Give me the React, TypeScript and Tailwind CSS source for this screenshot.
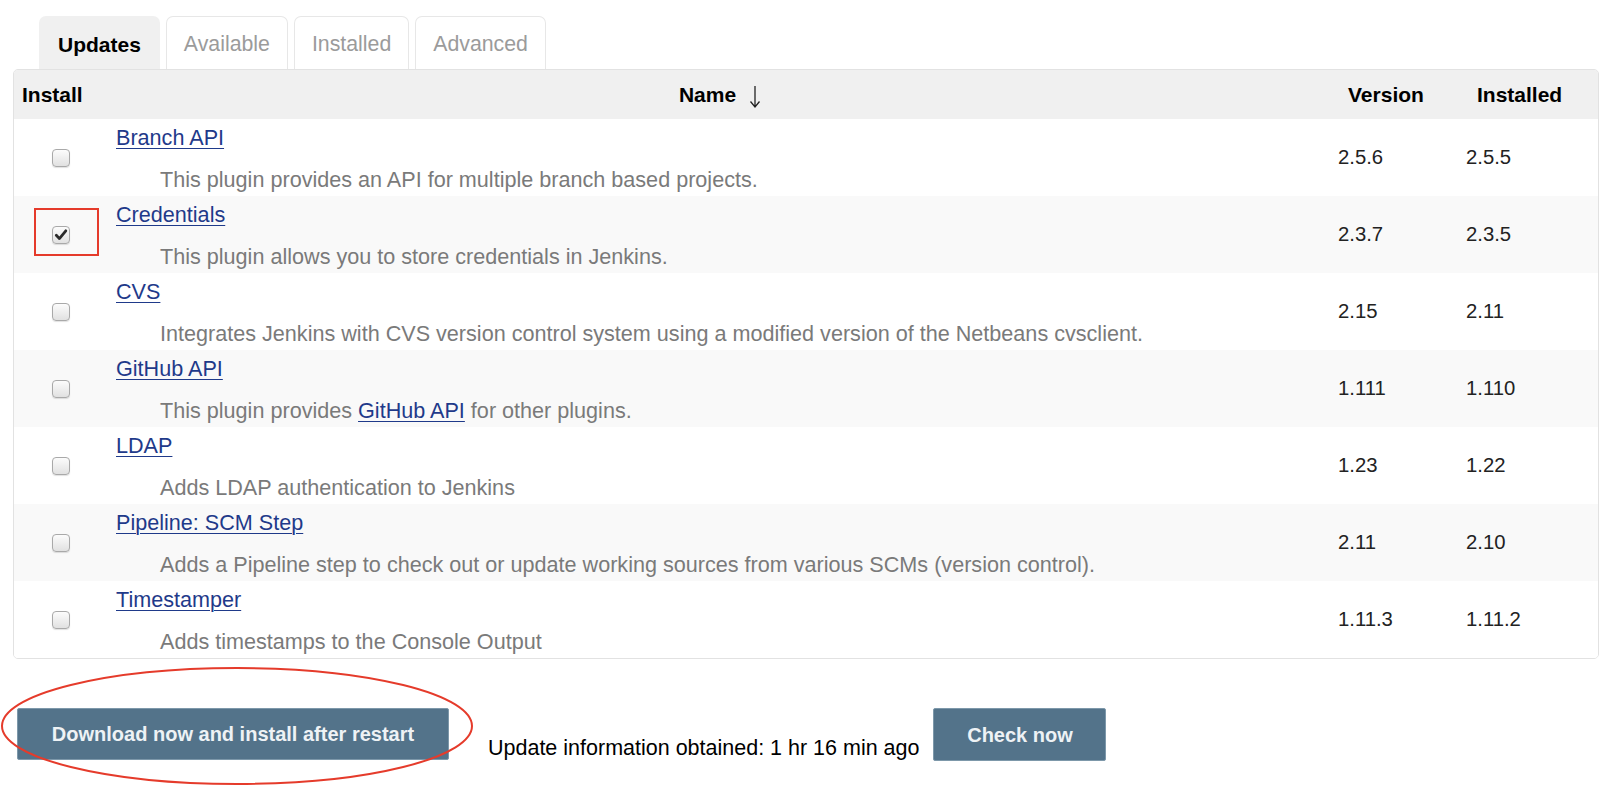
import React from "react";

type Row = {
  name: string;
  desc: React.ReactNode;
  version: string;
  installed: string;
  checked?: boolean;
};

const linkCls = "text-[#1f3a8a] underline decoration-1 underline-offset-[3px]";

const rows: Row[] = [
  { name: "Branch API", desc: "This plugin provides an API for multiple branch based projects.", version: "2.5.6", installed: "2.5.5" },
  { name: "Credentials", desc: "This plugin allows you to store credentials in Jenkins.", version: "2.3.7", installed: "2.3.5", checked: true },
  { name: "CVS", desc: "Integrates Jenkins with CVS version control system using a modified version of the Netbeans cvsclient.", version: "2.15", installed: "2.11" },
  {
    name: "GitHub API",
    desc: (
      <>
        This plugin provides <span className={linkCls}>GitHub API</span> for other plugins.
      </>
    ),
    version: "1.111",
    installed: "1.110",
  },
  { name: "LDAP", desc: "Adds LDAP authentication to Jenkins", version: "1.23", installed: "1.22" },
  { name: "Pipeline: SCM Step", desc: "Adds a Pipeline step to check out or update working sources from various SCMs (version control).", version: "2.11", installed: "2.10" },
  { name: "Timestamper", desc: "Adds timestamps to the Console Output", version: "1.11.3", installed: "1.11.2" },
];

function Checkbox({ checked }: { checked?: boolean }) {
  return (
    <div className="w-[18px] h-[18px] rounded-[4px] border border-[#a9a9a9] bg-gradient-to-b from-[#fcfcfc] to-[#e1e1e1] shadow-[0_1px_1px_rgba(0,0,0,0.12)] flex items-center justify-center">
      {checked && (
        <svg width="14" height="14" viewBox="0 0 14 14">
          <path d="M2.3 7.3 L5.4 10.6 L11.8 2.8" fill="none" stroke="#2a2a2a" strokeWidth="2.8" strokeLinecap="round" strokeLinejoin="round" />
        </svg>
      )}
    </div>
  );
}

export default function App() {
  const tabs = ["Updates", "Available", "Installed", "Advanced"];
  return (
    <div className="relative w-[1600px] h-[795px] overflow-hidden bg-white font-['Liberation_Sans',Arial,sans-serif] text-[21.6px]">
      <div className="pl-[13px] pr-[1px] pt-[16px]">
        {/* tabs */}
        <div className="flex gap-[6px] pl-[26px] h-[53px]">
          {tabs.map((t, i) =>
            i === 0 ? (
              <div key={t} className="px-[19px] pt-[4px] rounded-t-[7px] bg-[#f0f0f0] flex items-center font-bold text-[21px] text-black">
                {t}
              </div>
            ) : (
              <div key={t} className="px-[17px] pt-[4px] rounded-t-[7px] border border-b-0 border-[#e7e7e7] flex items-center text-[21.3px] text-[#9b9b9b]">
                {t}
              </div>
            )
          )}
        </div>
        {/* table */}
        <div className="border border-[#e2e2e2] rounded-[5px] overflow-hidden">
          <div className="grid grid-cols-[94px_1fr_128px_142px] h-[49px] bg-[#f0f0f0] items-center font-bold text-[21px] text-black">
            <div className="pl-[8px]">Install</div>
            <div className="flex justify-center items-center gap-[13px] pl-[4px]">
              <span>Name</span>
              <svg width="12" height="24" viewBox="0 0 12 24" className="mt-[4px]">
                <path d="M6 1 V22 M1.5 16.5 L6 22 L10.5 16.5" fill="none" stroke="#222" strokeWidth="1.3" />
              </svg>
            </div>
            <div className="pl-[20px]">Version</div>
            <div className="pl-[21px]">Installed</div>
          </div>
          {rows.map((r, i) => (
            <div
              key={r.name}
              className={`grid grid-cols-[94px_1fr_128px_142px] h-[77px] items-center ${i % 2 === 1 ? "bg-[#f9f9f9]" : "bg-white"}`}
            >
              <div className="flex justify-center">
                <Checkbox checked={r.checked} />
              </div>
              <div className="self-stretch pt-[7px] pl-[8px] leading-[24px]">
                <div>
                  <span className={linkCls}>{r.name}</span>
                </div>
                <div className="mt-[18px] pl-[44px] text-[#7a7a7a] whitespace-nowrap">{r.desc}</div>
              </div>
              <div className="pl-[10px] text-[#222] text-[20.3px]">{r.version}</div>
              <div className="pl-[10px] text-[#222] text-[20.3px]">{r.installed}</div>
            </div>
          ))}
        </div>
      </div>

      {/* bottom bar */}
      <div className="flex items-start pl-[17px] mt-[49px]">
        <button className="w-[432px] h-[52px] bg-[#53738a] border border-[#7d98aa] text-[#eef2f5] font-bold text-[20px] rounded-[2px]">
          Download now and install after restart
        </button>
        <div className="ml-[39px] mt-[28px] text-[21.5px] text-black leading-[24px] whitespace-nowrap">
          Update information obtained: 1 hr 16 min ago
        </div>
        <button className="ml-[14px] w-[173px] h-[53px] bg-[#53738a] border border-[#7d98aa] text-[#eef2f5] font-bold text-[20px] rounded-[2px]">
          Check now
        </button>
      </div>

      {/* annotations */}
      <div className="absolute left-[34px] top-[208px] w-[65px] h-[48px] border-2 border-[#e53b2b] pointer-events-none" />
      <svg className="absolute left-0 top-[666px] pointer-events-none" width="480" height="122" viewBox="0 0 480 122">
        <ellipse cx="237" cy="60" rx="235" ry="58" fill="none" stroke="#e53b2b" strokeWidth="2" />
      </svg>
    </div>
  );
}
